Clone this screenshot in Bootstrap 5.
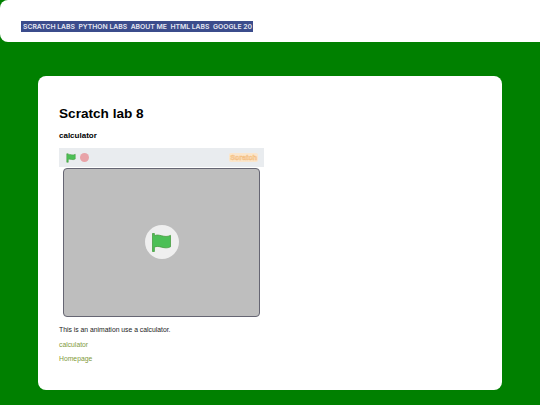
<!DOCTYPE html>
<html lang="en">
<head>
<meta charset="utf-8">
<title>Scratch lab 8</title>
<link rel="stylesheet" href="https://cdn.jsdelivr.net/npm/bootstrap@5.3.0/dist/css/bootstrap.min.css">
<style>
html, body { height: 405px; overflow: hidden; }
body { background: #008000; font-family: "Liberation Sans", Arial, sans-serif; color: #000; }
.top-band { background: #fff; height: 42px; border-radius: 8px 0 0 8px; padding: 21px 0 0 21px; }
.menu-strip { background: #3b4c8c; height: 11px; width: 232px; padding-left: 2px; gap: 3.5px; }
.menu-strip a { color: #e6e8f2; font: 600 6.8px/11px Inter, sans-serif; text-decoration: none; white-space: nowrap; }
.sheet { background: #fff; margin: 34px 38px 0; height: 314px; border-radius: 8px; padding: 28px 21px 0; }
.sheet h1 { font-size: 13.6px; line-height: 19px; font-weight: 700; margin: 0 0 7px; }
.sheet h2 { font-size: 8px; line-height: 11px; font-weight: 700; margin: 0 0 7px; }
.player { width: 205px; }
.player-bar { height: 19px; background: #e9ecef; padding: 0 6px 0 7px; }
.stop-dot { width: 9px; height: 9px; border-radius: 50%; background: #e8a3a8; margin-left: 4px; }
.wordmark { font: 700 7.4px/9px "Liberation Sans", sans-serif; color: #fbdcb4; letter-spacing: -.05px; -webkit-text-stroke: .5px #f3bd80; background: #fbe6cc; padding: 0 1px; margin-left: auto; border-radius: 2px; }
.stage { height: 149px; margin: 1px 4px 0; padding-bottom: 1px; background: #bebebe; border: 1px solid #666673; border-radius: 4px; }
.play-disc { width: 34px; height: 34px; border-radius: 50%; background: #efefef; }
.sheet p { font-size: 6.8px; line-height: 9px; margin: 0 0 5.5px; color: #222; }
.sheet p.first-line { margin-top: 8px; }
.sheet p a { color: #7f9a3b; text-decoration: none; }
</style>
</head>
<body>
<header class="top-band">
  <nav class="menu-strip d-flex align-items-center">
    <a href="#">SCRATCH LABS</a>
    <a href="#">PYTHON LABS</a>
    <a href="#">ABOUT ME</a>
    <a href="#">HTML LABS</a>
    <a href="#">GOOGLE 20</a>
  </nav>
</header>
<main class="sheet">
  <h1>Scratch lab 8</h1>
  <h2>calculator</h2>
  <div class="player">
    <div class="player-bar d-flex align-items-center">
      <svg width="10" height="10" viewBox="0 0 20 20"><path d="M1.5 1.5 V18.5 H4.5 V13 C8 10.5 13 15.5 18.5 12 V2.5 C13 6 8 1 4.5 3.5 V1.5 Z" fill="#4cbf56" stroke="#45993d" stroke-width="1"/></svg>
      <span class="stop-dot"></span>
      <span class="wordmark">Scratch</span>
    </div>
    <div class="stage d-flex align-items-center justify-content-center">
      <div class="play-disc d-flex align-items-center justify-content-center">
        <svg width="19" height="19" viewBox="0 0 20 20"><path d="M.5 .5 V19.5 H2.5 V15 C7 12 13 18 19.5 14.5 V2.5 C13 6 7 0 2.5 3 V.5 Z" fill="#4cbf56" stroke="#45993d" stroke-width=".8"/></svg>
      </div>
    </div>
  </div>
  <p class="first-line">This is an animation use a calculator.</p>
  <p><a href="#">calculator</a></p>
  <p><a href="#">Homepage</a></p>
</main>
<script src="https://cdn.jsdelivr.net/npm/bootstrap@5.3.0/dist/js/bootstrap.bundle.min.js"></script>
</body>
</html>
